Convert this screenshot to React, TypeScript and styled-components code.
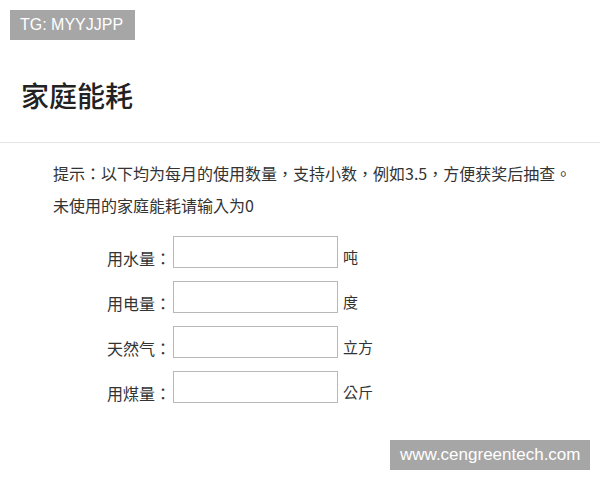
import React from "react";
import styled, { createGlobalStyle } from "styled-components";

const GlobalStyle = createGlobalStyle`
  html, body { margin: 0; padding: 0; background: #ffffff; }
  body { font-family: "Noto Sans CJK TC", "Noto Sans CJK SC", "Liberation Sans", sans-serif; color: #333; }
`;

const Page = styled.div`
  position: relative;
  width: 600px;
  height: 480px;
  overflow: hidden;
  background: #fff;
`;

const Watermark = styled.div<{ $top: number; $left: number; $width: number; $size: number }>`
  position: absolute;
  top: ${(p) => p.$top}px;
  left: ${(p) => p.$left}px;
  width: ${(p) => p.$width}px;
  box-sizing: border-box;
  background: #a6a6a6;
  color: #fff;
  font-family: "Liberation Sans", Arial, sans-serif;
  font-size: ${(p) => p.$size}px;
  line-height: 30px;
  height: 30px;
  padding: 0 10px;
  white-space: nowrap;
`;

const Header = styled.header`
  padding: 81px 21px 33px;
  border-bottom: 1px solid #e4e4e4;
`;

const Title = styled.h1`
  margin: 0;
  font-family: "Noto Sans CJK SC", sans-serif;
  font-size: 28px;
  line-height: 28px;
  font-weight: 500;
  color: #222;
`;

const Hint = styled.div`
  padding: 14px 0 0 53px;
  font-size: 16px;
  line-height: 32px;
  color: #333;
`;

const HintLine = styled.p`
  margin: 0;
  white-space: nowrap;
`;

const Form = styled.div`
  display: flex;
  flex-direction: column;
  gap: 13px;
  padding: 15px 0 0 107px;
`;

const Row = styled.div`
  display: flex;
  align-items: flex-start;
`;

const Label = styled.label`
  width: 64px;
  margin-right: 2px;
  padding-top: 13px;
  font-size: 16px;
  line-height: 18px;
  white-space: nowrap;
  color: #333;
`;

const Field = styled.input`
  box-sizing: border-box;
  width: 165px;
  height: 32px;
  border: 1px solid #b8b8b8;
  background: #fff;
  margin: 0;
  padding: 0 6px;
  outline: none;
`;

const Unit = styled.span`
  margin-left: 5px;
  padding-top: 12px;
  font-size: 15px;
  line-height: 18px;
  color: #333;
  white-space: nowrap;
`;

const rows = [
  { label: "用水量：", unit: "吨" },
  { label: "用电量：", unit: "度" },
  { label: "天然气：", unit: "立方" },
  { label: "用煤量：", unit: "公斤" },
];

export default function App() {
  return (
    <Page>
      <GlobalStyle />
      <Header>
        <Title>家庭能耗</Title>
      </Header>
      <Hint>
        <HintLine>提示：以下均为每月的使用数量，支持小数，例如3.5，方便获奖后抽查。</HintLine>
        <HintLine>未使用的家庭能耗请输入为0</HintLine>
      </Hint>
      <Form>
        {rows.map((r) => (
          <Row key={r.label}>
            <Label>{r.label}</Label>
            <Field type="text" />
            <Unit>{r.unit}</Unit>
          </Row>
        ))}
      </Form>
      <Watermark $top={10} $left={10} $width={125} $size={16}>TG: MYYJJPP</Watermark>
      <Watermark $top={440} $left={390} $width={200} $size={17}>www.cengreentech.com</Watermark>
    </Page>
  );
}
